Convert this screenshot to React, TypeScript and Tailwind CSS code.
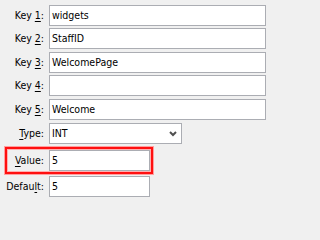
import React from "react";

const font = { fontFamily: '"DejaVu Sans Condensed", "Liberation Sans", sans-serif' };

interface FieldProps {
  label: string;
  hot: number;
  width: string;
  className?: string;
  children?: React.ReactNode;
}

const Field = ({ label, hot, width, className = "", children }: FieldProps) => (
  <div className={`flex h-[21px] items-center ${className}`}>
    <span className="w-[44px] shrink-0 text-right leading-[21px] text-black">
      {label.slice(0, hot)}
      <u className="underline-offset-2">{label[hot]}</u>
      {label.slice(hot + 1)}:
    </span>
    <div className={`ml-[5px] flex h-[21px] shrink-0 items-center border border-[#abadb3] bg-white pl-[2px] text-black ${width}`}>
      {children}
    </div>
  </div>
);

export default function App() {
  return (
    <div className="min-h-screen w-full bg-[#f0f0f0]">
      <div className="relative flex h-[202px] w-[271px] flex-col pt-[5px] text-[10.5px]" style={font}>
        <Field label="Key 1" hot={4} width="w-[217px]">widgets</Field>
        <Field label="Key 2" hot={4} width="w-[217px]" className="mt-[2px]">StaffID</Field>
        <Field label="Key 3" hot={4} width="w-[217px]" className="mt-[3px]">WelcomePage</Field>
        <Field label="Key 4" hot={4} width="w-[217px]" className="mt-[2px]" />
        <Field label="Key 5" hot={4} width="w-[217px]" className="mt-[3px]">Welcome</Field>
        <Field label="Type" hot={0} width="w-[133px] justify-between pr-[4px]" className="mt-[3px]">
          <span>INT</span>
          <svg width="8" height="6" viewBox="0 0 8 6">
            <path d="M1 1 L4 4 L7 1" fill="none" stroke="#505050" strokeWidth="2" />
          </svg>
        </Field>
        <Field label="Value" hot={0} width="w-[101px]" className="mt-[6px]">5</Field>
        <Field label="Default" hot={5} width="w-[101px]" className="mt-[5px]">5</Field>
        {/* red highlight drawn over the Value row */}
        <div className="pointer-events-none absolute left-[5px] top-[147px] h-[27px] w-[148px] border-2 border-[#ff1010] shadow-[0_0_0_1px_#ffa0a0,inset_0_0_0_1px_#ffb0b0]" />
      </div>
    </div>
  );
}
